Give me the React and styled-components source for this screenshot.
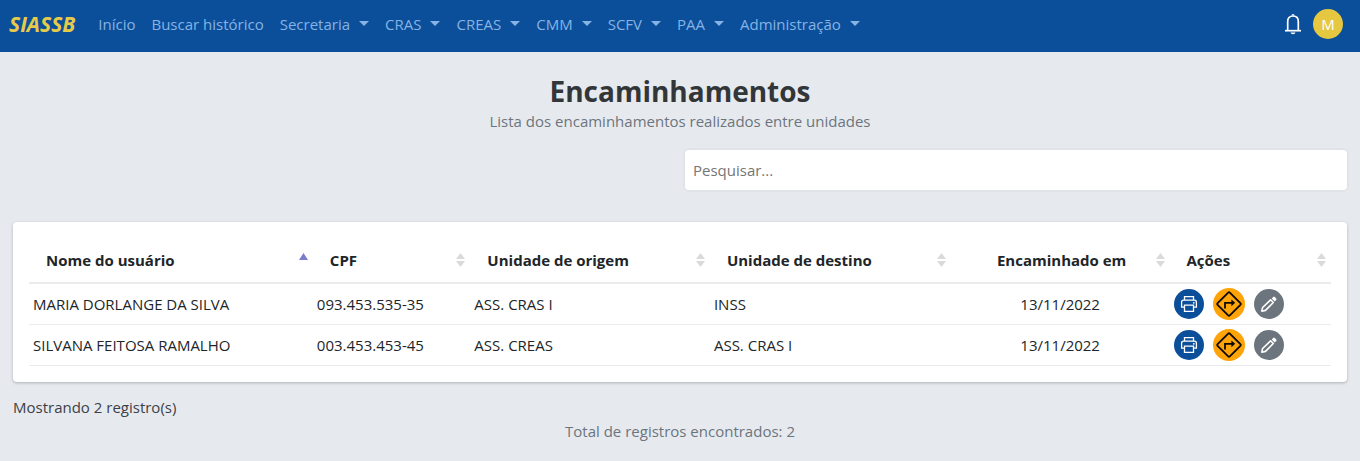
import React from "react";
import styled, { createGlobalStyle, css } from "styled-components";

const GlobalStyle = createGlobalStyle`
  *, *::before, *::after { box-sizing: border-box; }
  body {
    margin: 0;
    background: #e6eaef;
    color: #212529;
    font-family: "Segoe UI", "Open Sans", "Noto Sans", sans-serif;
    font-size: 15px;
    line-height: 24px;
  }
  button, input { font: inherit; }
`;

const NavBar = styled.header`
  display: flex;
  align-items: center;
  min-height: 52px;
  padding: 0 16px 4px 9px;
  background: #0b4f9a;
`;

const Brand = styled.a`
  margin-right: 15px;
  color: #e6cb4b;
  font-size: 21px;
  font-weight: 700;
  font-style: italic;
  text-decoration: none;
`;

const NavList = styled.nav`
  display: flex;
  flex-wrap: wrap;
  flex: 1;
`;

const navItem = css`
  display: flex;
  align-items: center;
  padding: 0 8px;
  border: 0;
  background: none;
  color: #86b3e4;
  text-decoration: none;
  cursor: pointer;
`;

const NavLink = styled.a`
  ${navItem}
`;

const NavDropdown = styled.button`
  ${navItem}

  &::after {
    content: "";
    margin: 0 0 2px 9px;
    border: 5px solid transparent;
    border-top-color: currentColor;
    border-bottom: 0;
  }
`;

const BellButton = styled.button`
  display: flex;
  margin-right: 8px;
  padding: 0;
  border: 0;
  background: none;
  color: #fff;
  cursor: pointer;
`;

const Avatar = styled.button`
  width: 30px;
  height: 30px;
  margin-right: 1px;
  padding: 0;
  border: 0;
  border-radius: 50%;
  background: #e6c740;
  color: #fff;
  cursor: pointer;
`;

const Page = styled.main`
  padding: 21px 13px 16px;
`;

const Title = styled.h1`
  margin: 0;
  color: #333638;
  font-size: 28px;
  font-weight: 700;
  line-height: 36px;
  text-align: center;
`;

const Subtitle = styled.p`
  margin: 0;
  color: #6c757d;
  text-align: center;
`;

const SearchRow = styled.form`
  display: flex;
  justify-content: flex-end;
  margin: 15px -2px 30px 4px;
`;

const SearchInput = styled.input`
  width: 50%;
  height: 44px;
  padding: 0 8px;
  border: 2px solid #e0e4e8;
  border-radius: 6px;
  background: #fff;
  color: #212529;

  &::placeholder {
    color: #757575;
    opacity: 1;
  }
`;

const Card = styled.section`
  padding: 16px;
  border-radius: 4px;
  background: #fff;
  box-shadow: 0 1px 3px rgba(0, 0, 0, 0.25);
`;

const Table = styled.table`
  width: 100%;
  border-collapse: separate;
  border-spacing: 0;
  table-layout: fixed;
`;

const Column = styled.col`
  width: ${(p) => p.$width};
`;

const HeadCell = styled.th`
  height: 46px;
  padding: 0;
  border-bottom: 2px solid #e9ebed;
`;

const SortButton = styled.button`
  display: flex;
  align-items: center;
  width: 100%;
  padding: 0 5px 0 17px;
  border: 0;
  background: none;
  color: #212529;
  font-weight: 700;
  cursor: pointer;
`;

const SortLabel = styled.span`
  flex: 1;
  text-align: ${(p) => (p.$center ? "center" : "left")};
`;

const SortMark = styled.svg`
  width: 9px;
  height: 14px;
`;

const Cell = styled.td`
  height: 41px;
  padding: 0 4px;
  border-bottom: 1px solid #e9ebed;
  text-align: ${(p) => (p.$center ? "center" : "left")};
`;

const Actions = styled.div`
  display: flex;
  align-items: center;
  gap: 9px;
`;

const tones = {
  print: css`
    background: #0b4f9a;
    color: #fff;
  `,
  forward: css`
    width: 32px;
    height: 32px;
    background: #ffa408;
    color: #0d0900;
  `,
  edit: css`
    background: #6c757d;
    color: #fff;
  `,
};

const ActionButton = styled.button`
  display: flex;
  align-items: center;
  justify-content: center;
  width: 30px;
  height: 30px;
  padding: 0;
  border: 0;
  border-radius: 50%;
  cursor: pointer;
  ${(p) => tones[p.$tone]}
`;

const Showing = styled.p`
  margin: 13px 0 0;
  color: #3c4146;
`;

const Total = styled.p`
  margin: 0;
  color: #6c757d;
  text-align: center;
`;

const links = ["Início", "Buscar histórico"];
const menus = ["Secretaria", "CRAS", "CREAS", "CMM", "SCFV", "PAA", "Administração"];

const columns = [
  { label: "Nome do usuário", width: "21.8%", sorted: true },
  { label: "CPF", width: "12.1%" },
  { label: "Unidade de origem", width: "18.4%" },
  { label: "Unidade de destino", width: "18.5%" },
  { label: "Encaminhado em", width: "16.8%", center: true },
  { label: "Ações", width: "12.4%" },
];

const rows = [
  ["MARIA DORLANGE DA SILVA", "093.453.535-35", "ASS. CRAS I", "INSS", "13/11/2022"],
  ["SILVANA FEITOSA RAMALHO", "003.453.453-45", "ASS. CREAS", "ASS. CRAS I", "13/11/2022"],
];

function SortIcon({ sorted }) {
  return (
    <SortMark viewBox="0 0 9 14" aria-hidden="true">
      <path d={sorted ? "M0 7L4.5 0L9 7Z" : "M0 6L4.5 0L9 6Z"} fill={sorted ? "#7b7bd0" : "#d9dadb"} />
      {!sorted && <path d="M0 8H9L4.5 14Z" fill="#d9dadb" />}
    </SortMark>
  );
}

function BellIcon() {
  return (
    <svg width="24" height="24" viewBox="0 0 24 24" fill="none" stroke="currentColor" strokeWidth="1.7" aria-hidden="true">
      <path d="M6.7 18.5V9.5C6.7 6 9 4 12 4S17.3 6 17.3 9.5V18.5" />
      <path d="M4 18.7H20" />
      <path d="M10.5 3.6a1.5 1.5 0 0 1 3 0ZM9.6 20.5h4.8a2.4 1.7 0 0 1-4.8 0Z" fill="currentColor" stroke="none" />
    </svg>
  );
}

function PrintIcon() {
  return (
    <svg width="20" height="20" viewBox="0 0 20 20" fill="none" stroke="currentColor" strokeWidth="1.3" aria-hidden="true">
      <path d="M5.5 6.2V2.7H14.5V6.2" />
      <path d="M5.5 13.2H2.6V8.2Q2.6 6.2 4.6 6.2H15.4Q17.4 6.2 17.4 8.2V13.2H14.5" />
      <path d="M5.5 11.2H14.5V17.3H5.5Z" />
      <circle cx="14.8" cy="8.8" r="0.9" fill="currentColor" stroke="none" />
    </svg>
  );
}

function ForwardIcon() {
  return (
    <svg width="26" height="26" viewBox="0 0 26 26" fill="none" stroke="currentColor" strokeWidth="1.8" aria-hidden="true">
      <path d="M12.2 1.6Q13 .8 13.8 1.6L24.4 12.2Q25.2 13 24.4 13.8L13.8 24.4Q13 25.2 12.2 24.4L1.6 13.8Q.8 13 1.6 12.2Z" />
      <path d="M9 17.6V11.8H16" />
      <path d="M15.4 8.4L19.2 11.8L15.4 15.2Z" fill="currentColor" stroke="none" />
    </svg>
  );
}

function EditIcon() {
  return (
    <svg width="20" height="20" viewBox="0 0 20 20" fill="none" stroke="currentColor" strokeWidth="1.6" aria-hidden="true">
      <path d="M2.8 17.2L3.6 13.5L11.6 5.8L14.3 8.5L6.5 16.4Z" strokeLinejoin="round" />
      <path d="M12.7 4.5L14.2 3Q15 2.2 15.8 3L17.2 4.4Q18 5.2 17.2 6L15.7 7.5Z" fill="currentColor" stroke="none" />
    </svg>
  );
}

export default function App() {
  return (
    <>
      <GlobalStyle />
      <NavBar>
        <Brand href="#">SIASSB</Brand>
        <NavList>
          {links.map((label) => (
            <NavLink key={label} href="#">{label}</NavLink>
          ))}
          {menus.map((label) => (
            <NavDropdown key={label} type="button" aria-haspopup="true">{label}</NavDropdown>
          ))}
        </NavList>
        <BellButton type="button" aria-label="Notificações"><BellIcon /></BellButton>
        <Avatar type="button">M</Avatar>
      </NavBar>
      <Page>
        <Title>Encaminhamentos</Title>
        <Subtitle>Lista dos encaminhamentos realizados entre unidades</Subtitle>
        <SearchRow role="search">
          <SearchInput type="search" placeholder="Pesquisar..." aria-label="Pesquisar" />
        </SearchRow>
        <Card>
          <Table>
            <colgroup>
              {columns.map((c) => <Column key={c.label} $width={c.width} />)}
            </colgroup>
            <thead>
              <tr>
                {columns.map((c) => (
                  <HeadCell key={c.label} scope="col" aria-sort={c.sorted ? "ascending" : "none"}>
                    <SortButton type="button">
                      <SortLabel $center={c.center}>{c.label}</SortLabel>
                      <SortIcon sorted={c.sorted} />
                    </SortButton>
                  </HeadCell>
                ))}
              </tr>
            </thead>
            <tbody>
              {rows.map((row) => (
                <tr key={row[1]}>
                  {row.map((value, i) => (
                    <Cell key={columns[i].label} $center={columns[i].center}>{value}</Cell>
                  ))}
                  <Cell>
                    <Actions>
                      <ActionButton type="button" $tone="print" aria-label="Imprimir"><PrintIcon /></ActionButton>
                      <ActionButton type="button" $tone="forward" aria-label="Encaminhar"><ForwardIcon /></ActionButton>
                      <ActionButton type="button" $tone="edit" aria-label="Editar"><EditIcon /></ActionButton>
                    </Actions>
                  </Cell>
                </tr>
              ))}
            </tbody>
          </Table>
        </Card>
        <Showing>Mostrando 2 registro(s)</Showing>
        <Total>Total de registros encontrados: 2</Total>
      </Page>
    </>
  );
}
